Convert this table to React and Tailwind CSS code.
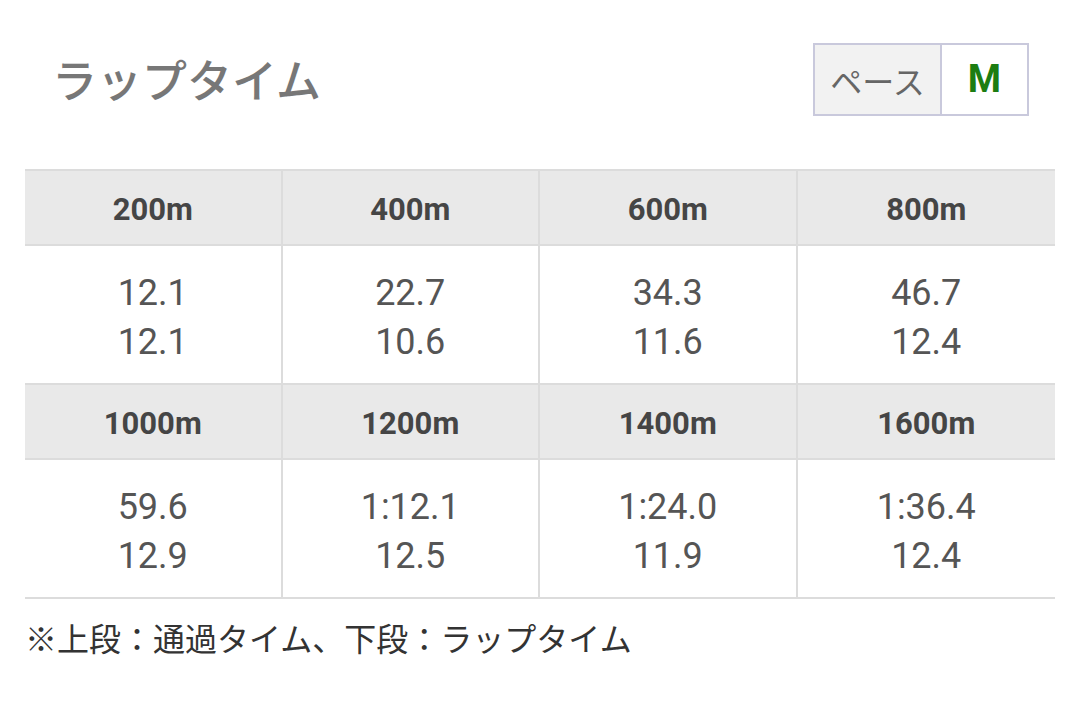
const rows = [
    [
        { d: '200m', a: '12.1', b: '12.1' },
        { d: '400m', a: '22.7', b: '10.6' },
        { d: '600m', a: '34.3', b: '11.6' },
        { d: '800m', a: '46.7', b: '12.4' },
    ],
    [
        { d: '1000m', a: '59.6', b: '12.9' },
        { d: '1200m', a: '1:12.1', b: '12.5' },
        { d: '1400m', a: '1:24.0', b: '11.9' },
        { d: '1600m', a: '1:36.4', b: '12.4' },
    ],
];

export default function App() {
    return (
        <div className="w-[1080px] h-[716px] bg-white font-['Roboto','Noto_Sans_CJK_JP',sans-serif]">
            <div className="flex items-center justify-between pl-[52px] pr-[51px] pt-[43px] h-[116px]">
                <h2 className="text-[45px] leading-none font-medium text-[#777] font-['Noto_Sans_CJK_JP',sans-serif] -mt-[2px]">ラップタイム</h2>
                <div className="flex h-[73px] border-2 border-[#c9c9dc]">
                    <div className="w-[127px] bg-[#f2f2f2] flex items-center justify-center text-[32px] text-[#666] border-r-2 border-[#c9c9dc] font-['Noto_Sans_CJK_JP',sans-serif]">
                        ペース
                    </div>
                    <div className="w-[85px] flex items-center justify-center text-[38px] font-bold text-[#1c7d12]">
                        M
                    </div>
                </div>
            </div>

            <div className="mx-[25px] mt-[53px] w-[1030px] border-t-2 border-[#dcdcdc]">
                {rows.map((row, i) => (
                    <div key={i}>
                        <div className="grid grid-cols-4 bg-[#e9e9e9] border-b-2 border-[#dcdcdc]">
                            {row.map((c, j) => (
                                <div key={j} className={`h-[73px] pt-[5px] flex items-center justify-center text-[31px] font-bold text-[#454545] ${j < 3 ? 'border-r-2 border-[#dcdcdc]' : ''}`}>
                                    {c.d}
                                </div>
                            ))}
                        </div>
                        <div className="grid grid-cols-4 border-b-2 border-[#dcdcdc]">
                            {row.map((c, j) => (
                                <div key={j} className={`h-[137px] pt-[6px] flex flex-col items-center justify-center text-[36px] leading-[49px] text-[#555] ${j < 3 ? 'border-r-2 border-[#dcdcdc]' : ''}`}>
                                    <span>{c.a}</span>
                                    <span>{c.b}</span>
                                </div>
                            ))}
                        </div>
                    </div>
                ))}
            </div>

            <p className="ml-[25px] mt-[16px] text-[32px] leading-[44px] text-[#333] font-['Noto_Sans_CJK_JP',sans-serif]">
                ※上段：通過タイム、下段：ラップタイム
            </p>
        </div>
    );
}
